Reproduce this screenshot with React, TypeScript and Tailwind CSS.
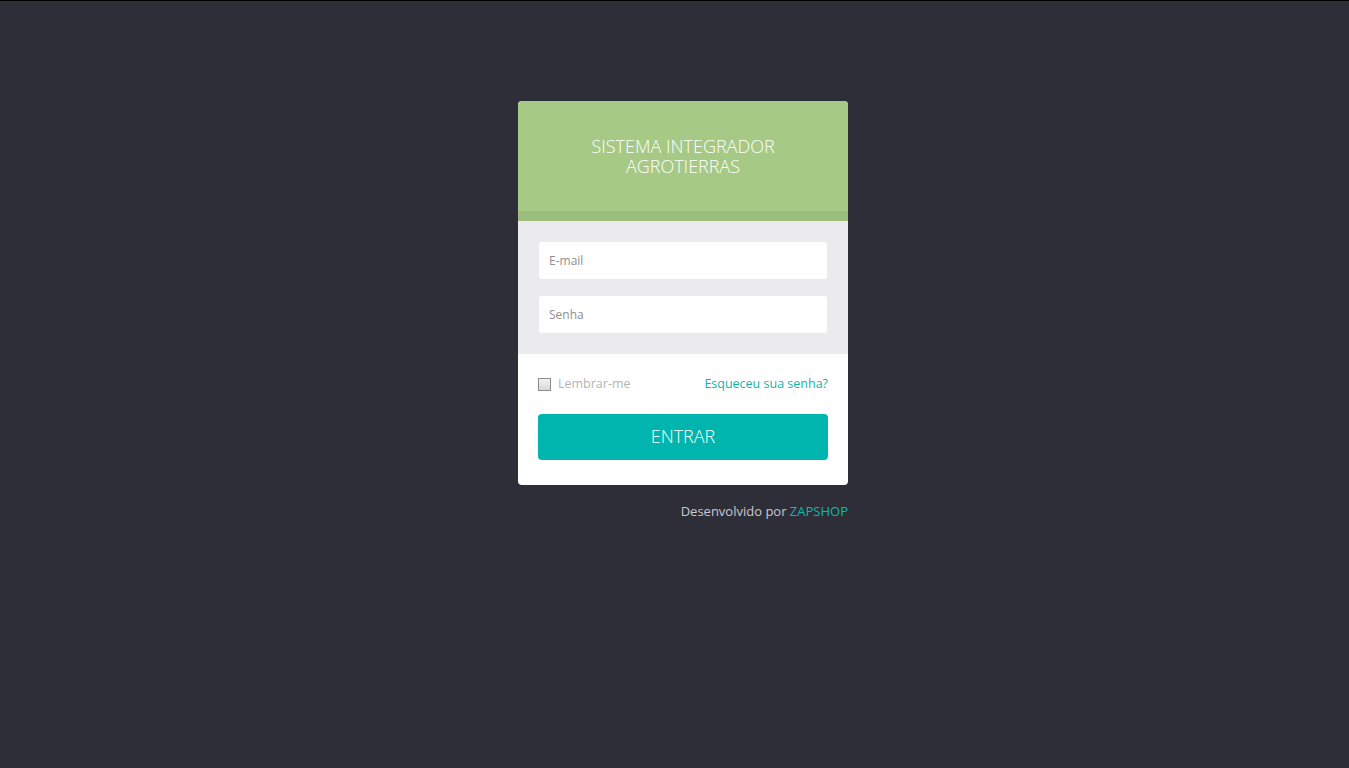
import { useState } from "react";

const font = { fontFamily: '"Open Sans", "Liberation Sans", sans-serif' };

export default function App() {
  const [remember, setRemember] = useState(false);

  return (
    <div
      className="min-h-screen w-full border-t border-black bg-[#2e2e38] pl-[17px] pt-[100px]"
      style={font}
    >
      <div className="mx-auto w-[330px]">
        <div className="overflow-hidden rounded-[4px] bg-white">
          <div className="border-b-[10px] border-[#9dbd7f] bg-[#a6c986] pb-[35px] pt-[35px] text-center">
            <h1 className="text-[18px] font-light leading-[20px] text-white">
              SISTEMA INTEGRADOR
              <br />
              AGROTIERRAS
            </h1>
          </div>

          <div className="flex flex-col gap-[17px] bg-[#ebebed] px-[21px] py-[21px]">
            <input
              type="email"
              placeholder="E-mail"
              className="h-[37px] w-full rounded-[3px] bg-white px-[10px] text-[12px] text-gray-700 outline-none placeholder:text-[#8f8f8f]"
            />
            <input
              type="password"
              placeholder="Senha"
              className="h-[37px] w-full rounded-[3px] bg-white px-[10px] text-[12px] text-gray-700 outline-none placeholder:text-[#8f8f8f]"
            />
          </div>

          <div className="px-[20px] pb-[25px] pt-[21px]">
            <div className="flex items-center justify-between">
              <label className="flex cursor-pointer items-center gap-[7px] text-[12.5px] text-[#b4b4b4]">
                <span
                  onClick={() => setRemember(!remember)}
                  className="h-[13px] w-[13px] border border-[#8c8c8c] bg-gradient-to-b from-[#f2f2f2] to-[#d9d9d9]"
                />
                Lembrar-me
              </label>
              <a href="#" className="text-[12.5px] text-[#12b3aa]">
                Esqueceu sua senha?
              </a>
            </div>
            <button className="mt-[20px] h-[46px] w-full rounded-[4px] bg-[#00b5ad] text-[18px] font-light text-white">
              ENTRAR
            </button>
          </div>
        </div>

        <p className="mt-[17px] text-right text-[13px] text-[#c9c9cf]">
          Desenvolvido por <span className="text-[#12b8ae]">ZAPSHOP</span>
        </p>
      </div>
    </div>
  );
}
